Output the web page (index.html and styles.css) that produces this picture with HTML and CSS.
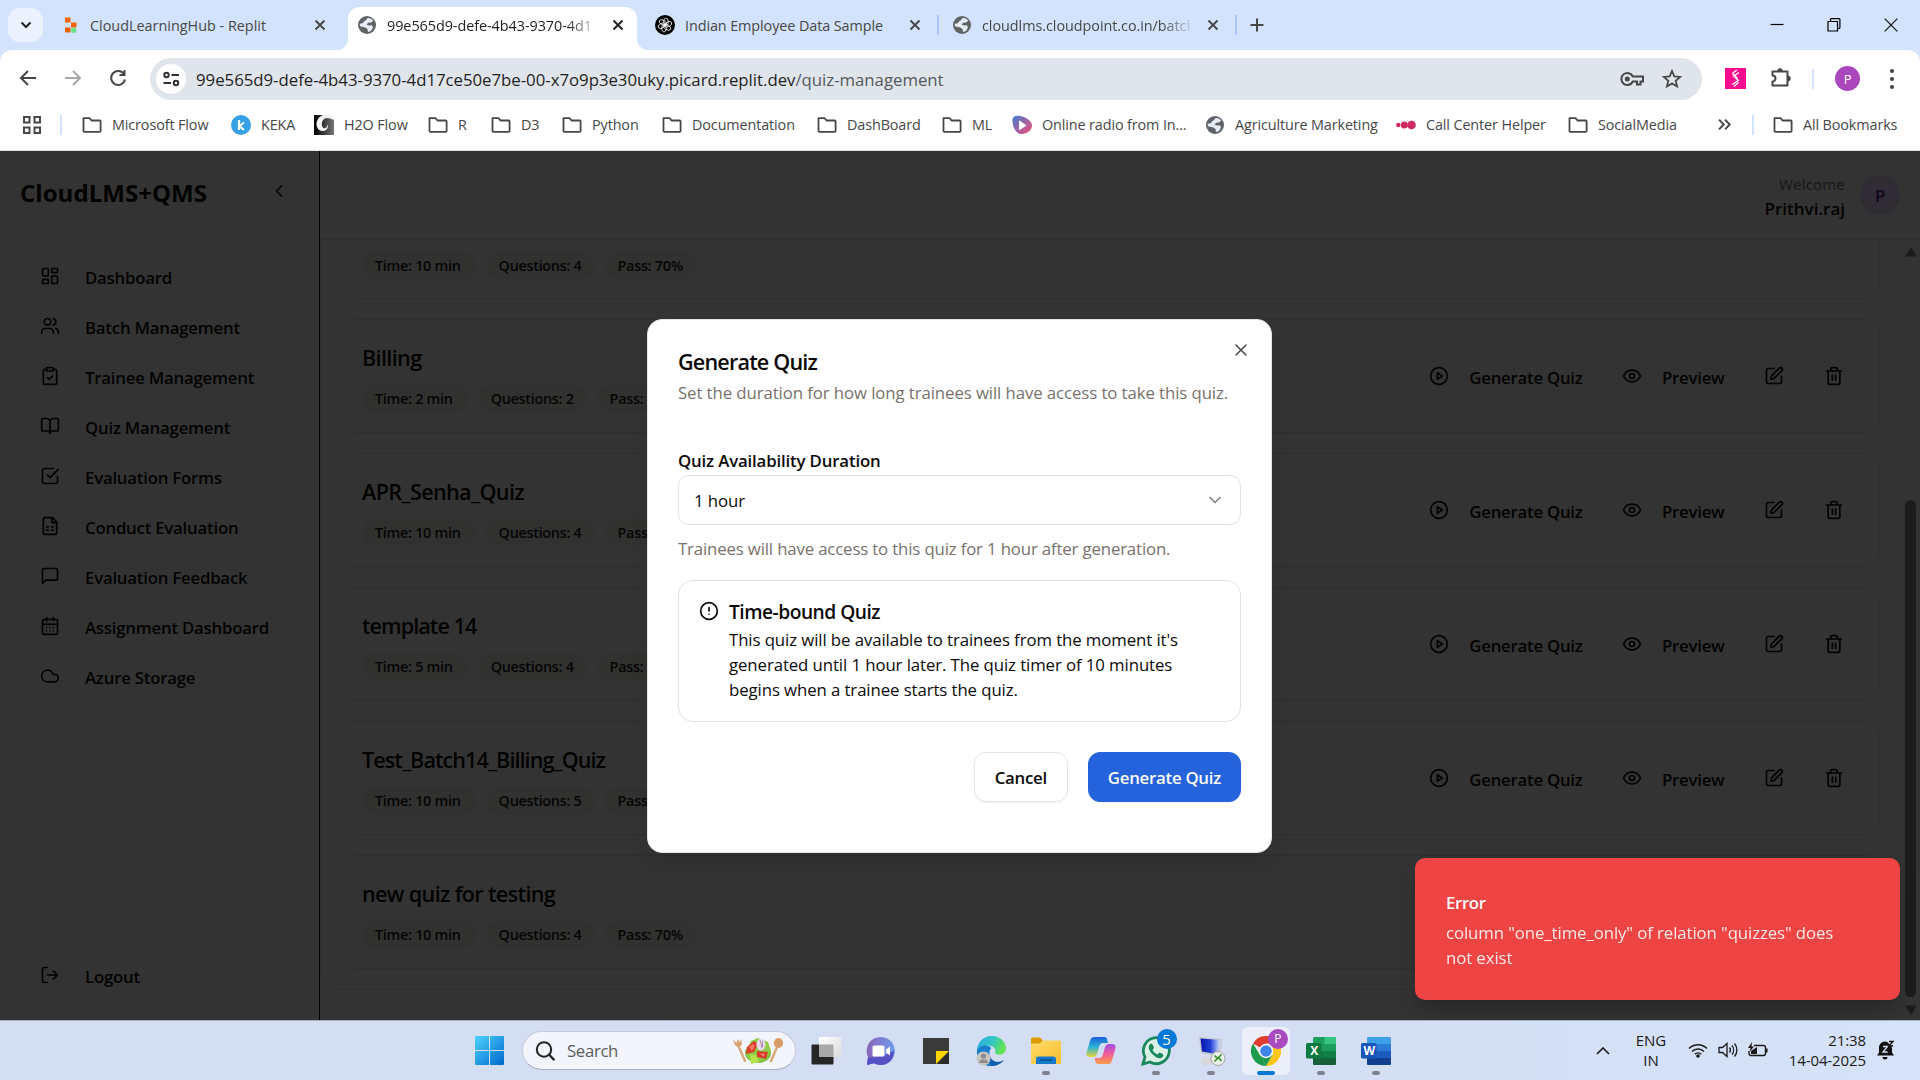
FILE: index.html
```html
<!DOCTYPE html>
<html lang="en">
<head>
<meta charset="utf-8">
<title>CloudLMS+QMS - Quiz Management</title>
<link rel="stylesheet" href="styles.css">
</head>
<body>
<svg class="defs" aria-hidden="true">
  <defs>
    <linearGradient id="g-win" x1="0" y1="0" x2="1" y2="1"><stop offset="0" stop-color="#4cd3fd"/><stop offset="1" stop-color="#0067cc"/></linearGradient>
    <linearGradient id="g-radio" x1="0" y1="0" x2="1" y2="1"><stop offset="0" stop-color="#3f7fd0"/><stop offset="1" stop-color="#fb4a78"/></linearGradient>
    <linearGradient id="g-h2o" x1="0" y1="0" x2="1" y2="0"><stop offset="0" stop-color="#000"/><stop offset="1" stop-color="#777"/></linearGradient>
    <linearGradient id="g-chat" x1="0" y1="0" x2="1" y2="0"><stop offset="0" stop-color="#8a63b5"/><stop offset="1" stop-color="#6f9cf0"/></linearGradient>
    <linearGradient id="g-edge" x1="0" y1="0" x2="1" y2="0.3"><stop offset="0" stop-color="#2aa7e8"/><stop offset=".6" stop-color="#35c7c0"/><stop offset="1" stop-color="#62e454"/></linearGradient>
    <linearGradient id="g-folder" x1="0" y1="0" x2="1" y2="1"><stop offset="0" stop-color="#ffdb6b"/><stop offset="1" stop-color="#f9bf2c"/></linearGradient>
    <linearGradient id="g-cop1" x1="0" y1="0" x2="0" y2="1"><stop offset="0" stop-color="#1a5fd8"/><stop offset=".5" stop-color="#2bb3d6"/><stop offset="1" stop-color="#e8d53a"/></linearGradient>
    <linearGradient id="g-cop2" x1="0" y1="0" x2="0" y2="1"><stop offset="0" stop-color="#a34ee8"/><stop offset=".5" stop-color="#f0609a"/><stop offset="1" stop-color="#fb9a45"/></linearGradient>
    <linearGradient id="g-pc" x1="0" y1="0" x2="1" y2="0"><stop offset="0" stop-color="#0a14a8"/><stop offset=".5" stop-color="#1f3fd6"/><stop offset="1" stop-color="#dbe6ff"/></linearGradient>
    <linearGradient id="g-tv" x1="0" y1="0" x2="1" y2="1"><stop offset="0" stop-color="#fff"/><stop offset="1" stop-color="#dcdcdc"/></linearGradient>

    <symbol id="i-close" viewBox="0 0 12 12"><path d="M1.5 1.5l9 9m0-9l-9 9" fill="none" stroke="currentColor" stroke-width="1.9"/></symbol>
    <symbol id="i-folder" viewBox="0 0 20 20"><path d="M1.5 3.2h6l2 2.3h8.2a.9.900 0 0 1 .9.900v9.500a.9.900 0 0 1-.9.900H2.400a.9.900 0 0 1-.9-.900z" fill="none" stroke="currentColor" stroke-width="1.8" stroke-linejoin="round"/></symbol>
    <symbol id="i-globe" viewBox="0 0 20 20"><circle cx="10" cy="10" r="9" fill="#5f6368"/><path d="M10.500 3c2.500-.3 4.500.9 5.700 2.700L14 7.500l-3 .2-1.300 2 2.300.8 2.800-.3 1.200 2-1.500 3c-1 1-2.300 1.700-3.500 1.800l-.5-3-2.200-1.500L3 11.200l-.3-2.400 3-.6 2-2.500 1.300-.4z" fill="#e6ecf5"/></symbol>
    <symbol id="i-grid" viewBox="0 0 24 24"><rect x="3" y="3" width="7" height="9" rx="1"/><rect x="14" y="3" width="7" height="5" rx="1"/><rect x="14" y="12" width="7" height="9" rx="1"/><rect x="3" y="16" width="7" height="5" rx="1"/></symbol>
    <symbol id="i-users" viewBox="0 0 24 24"><path d="M16 21v-2a4 4 0 0 0-4-4H6a4 4 0 0 0-4 4v2"/><circle cx="9" cy="7" r="4"/><path d="M22 21v-2a4 4 0 0 0-3-3.870M16 3.130a4 4 0 0 1 0 7.750"/></symbol>
    <symbol id="i-clip" viewBox="0 0 24 24"><rect x="8" y="2" width="8" height="4" rx="1"/><path d="M16 4h2a2 2 0 0 1 2 2v14a2 2 0 0 1-2 2H6a2 2 0 0 1-2-2V6a2 2 0 0 1 2-2h2M9 14l2 2 4-4"/></symbol>
    <symbol id="i-book" viewBox="0 0 24 24"><path d="M12 7v14M3 18a1 1 0 0 1-1-1V4a1 1 0 0 1 1-1h5a4 4 0 0 1 4 4 4 4 0 0 1 4-4h5a1 1 0 0 1 1 1v13a1 1 0 0 1-1 1h-6a3 3 0 0 0-3 3 3 3 0 0 0-3-3z"/></symbol>
    <symbol id="i-check" viewBox="0 0 24 24"><path d="M9 11l3 3L22 4M21 12v7a2 2 0 0 1-2 2H5a2 2 0 0 1-2-2V5a2 2 0 0 1 2-2h11"/></symbol>
    <symbol id="i-sheet" viewBox="0 0 24 24"><path d="M15 2H6a2 2 0 0 0-2 2v16a2 2 0 0 0 2 2h12a2 2 0 0 0 2-2V7zM14 2v4a2 2 0 0 0 2 2h4M8 13h2M14 13h2M8 17h2M14 17h2"/></symbol>
    <symbol id="i-msg" viewBox="0 0 24 24"><path d="M21 15a2 2 0 0 1-2 2H7l-4 4V5a2 2 0 0 1 2-2h14a2 2 0 0 1 2 2z"/></symbol>
    <symbol id="i-cal" viewBox="0 0 24 24"><path d="M8 2v4M16 2v4M3 10h18M8 14h.010M12 14h.010M16 14h.010M8 18h.010M12 18h.010M16 18h.010"/><rect x="3" y="4" width="18" height="18" rx="2"/></symbol>
    <symbol id="i-cloud" viewBox="0 0 24 24"><path d="M17.500 19H9a7 7 0 1 1 6.710-9h1.790a4.500 4.500 0 1 1 0 9z"/></symbol>
    <symbol id="i-out" viewBox="0 0 24 24"><path d="M9 21H5a2 2 0 0 1-2-2V5a2 2 0 0 1 2-2h4M16 17l5-5-5-5M21 12H9"/></symbol>
    <symbol id="i-play" viewBox="0 0 24 24"><circle cx="12" cy="12" r="10"/><path d="M10 8l6 4-6 4z"/></symbol>
    <symbol id="i-eye" viewBox="0 0 24 24"><path d="M2.060 12.350a1 1 0 0 1 0-.7 10.750 10.750 0 0 1 19.880 0 1 1 0 0 1 0 .7 10.750 10.750 0 0 1-19.880 0z"/><circle cx="12" cy="12" r="3"/></symbol>
    <symbol id="i-edit" viewBox="0 0 24 24"><path d="M12 3H5a2 2 0 0 0-2 2v14a2 2 0 0 0 2 2h14a2 2 0 0 0 2-2v-7M18.380 2.620a1 1 0 0 1 3 3l-9.010 9.010a2 2 0 0 1-.850.510l-2.870.840a.5.500 0 0 1-.620-.620l.840-2.870a2 2 0 0 1 .510-.850z"/></symbol>
    <symbol id="i-trash" viewBox="0 0 24 24"><path d="M3 6h18M19 6v14a2 2 0 0 1-2 2H7a2 2 0 0 1-2-2V6M8 6V4a2 2 0 0 1 2-2h4a2 2 0 0 1 2 2v2M10 11v6M14 11v6"/></symbol>
    <symbol id="i-left" viewBox="0 0 24 24"><path d="M15 18l-6-6 6-6"/></symbol>
    <symbol id="i-down" viewBox="0 0 24 24"><path d="M6 9l6 6 6-6"/></symbol>
    <symbol id="i-x" viewBox="0 0 24 24"><path d="M18 6L6 18M6 6l12 12"/></symbol>
    <symbol id="i-alert" viewBox="0 0 24 24"><circle cx="12" cy="12" r="10"/><path d="M12 8v4M12 16h.010"/></symbol>
  </defs>
</svg>

<header class="browser">
  <div class="tabstrip">
    <div class="tab-search"><svg width="12" height="8" viewBox="0 0 12 8"><path d="M1.500 1.500L6 6l4.500-4.500" fill="none" stroke="#1f1f1f" stroke-width="2"/></svg></div>
    <div class="tab tab-first">
      <svg class="fav" viewBox="0 0 20 20"><path d="M4 2.500h5.500v5H4zM10 7.500h5.500v5H10zM4 12.500h5.500v5H4z" fill="#f26207"/><circle cx="12.800" cy="15.200" r="2.700" fill="#6fe08a"/></svg>
      <span class="tab-title">CloudLearningHub - Replit</span>
      <svg class="tab-x"><use href="#i-close"/></svg>
    </div>
    <div class="tab tab-active">
      <svg class="fav"><use href="#i-globe"/></svg>
      <span class="tab-title fade">99e565d9-defe-4b43-9370-4d1</span>
      <svg class="tab-x"><use href="#i-close"/></svg>
    </div>
    <div class="tab tab-third">
      <svg class="fav" viewBox="0 0 20 20"><circle cx="10" cy="10" r="10" fill="#000"/><g fill="none" stroke="#fff" stroke-width=".8"><ellipse cx="11" cy="7" rx="2.300" ry="4"/><ellipse cx="11" cy="7" rx="2.300" ry="4" transform="rotate(60 10 10)"/><ellipse cx="11" cy="7" rx="2.300" ry="4" transform="rotate(120 10 10)"/><ellipse cx="11" cy="7" rx="2.300" ry="4" transform="rotate(180 10 10)"/><ellipse cx="11" cy="7" rx="2.300" ry="4" transform="rotate(240 10 10)"/><ellipse cx="11" cy="7" rx="2.300" ry="4" transform="rotate(300 10 10)"/></g></svg>
      <span class="tab-title">Indian Employee Data Sample</span>
      <svg class="tab-x"><use href="#i-close"/></svg>
    </div>
    <div class="tab tab-fourth">
      <svg class="fav"><use href="#i-globe"/></svg>
      <span class="tab-title fade">cloudlms.cloudpoint.co.in/batch</span>
      <svg class="tab-x"><use href="#i-close"/></svg>
    </div>
    <svg class="tab-plus" viewBox="0 0 14 14"><path d="M7 .5v13M.5 7h13" stroke="#474747" stroke-width="2"/></svg>
    <div class="win-controls">
      <svg viewBox="0 0 14 14"><path d="M.5 6.500h13" stroke="#000" stroke-width="1.200"/></svg>
      <svg viewBox="0 0 14 14"><path d="M1 3.500h9.500V13H1zM3.500 3.200V1.500a.8.800 0 0 1 .8-.8h7.700a.9.900 0 0 1 .9.900v8a.9.900 0 0 1-.9.900h-1" fill="none" stroke="#000" stroke-width="1.200"/></svg>
      <svg viewBox="0 0 14 14"><path d="M.7.700l12.600 12.600M13.300.700L.7 13.300" stroke="#111" stroke-width="1.200"/></svg>
    </div>
  </div>

  <div class="toolbar">
    <svg class="tb back" viewBox="0 0 18 18"><path d="M17 9H2M9 2L2 9l7 7" fill="none" stroke="#474747" stroke-width="2"/></svg>
    <svg class="tb fwd" viewBox="0 0 18 18"><path d="M1 9h15M9 2l7 7-7 7" fill="none" stroke="#a8a8a8" stroke-width="2"/></svg>
    <svg class="tb reload" viewBox="0 0 18 18"><path d="M15.300 5.500A7 7 0 1 0 16 10.500" fill="none" stroke="#474747" stroke-width="2"/><path d="M16.500 1v6h-6V5h4V1z" fill="#474747"/></svg>
    <div class="omnibox">
      <div class="site"><svg width="17" height="16" viewBox="0 0 17 16"><g fill="none" stroke="#303134" stroke-width="2"><circle cx="3.500" cy="4" r="2.200"/><path d="M8.500 4H16M.5 12H8"/><circle cx="13" cy="12" r="2.200"/></g></svg></div>
      <span class="url">99e565d9-defe-4b43-9370-4d17ce50e7be-00-x7o9p3e30uky.picard.replit.dev<span>/quiz-management</span></span>
      <svg class="key" viewBox="0 0 24 16"><path d="M12.800 5.500a6 6 0 1 0 0 5H17v3h3.500v-3H23v-5z" fill="none" stroke="#474747" stroke-width="2"/><circle cx="7.300" cy="8" r="2.500" fill="#474747"/></svg>
      <svg class="star" viewBox="0 0 20 20"><path d="M10 2l2.300 5.400 5.900.5-4.500 3.900 1.400 5.700-5.100-3-5.100 3 1.400-5.700-4.500-3.900 5.900-.5z" fill="none" stroke="#474747" stroke-width="1.800"/></svg>
    </div>
    <svg class="ext" viewBox="0 0 21 21"><path d="M0 0h21v21H0z" fill="#fb0a8e"/><path d="M12 2L7.500 5.200M14 4.500L8 8.500M7.500 5.500l5 5M9.500 9L14 13M13 12.500L7.500 16.500M13.500 14.500L9 18.500" stroke="#fff" stroke-width="1.400" fill="none"/></svg>
    <svg class="puzzle" viewBox="0 0 22 22"><path d="M2.500 5.500h15v14h-15v-4a3 3 0 0 0 0-6z" fill="none" stroke="#474747" stroke-width="2" stroke-linejoin="round"/><path d="M7.300 5a2.700 2.700 0 0 1 5.400 0zM18 9.800a2.700 2.700 0 0 1 0 5.400z" fill="#474747"/></svg>
    <i class="vsep"></i>
    <span class="profile">P</span>
    <svg class="dots" viewBox="0 0 6 22"><g fill="#474747"><circle cx="3" cy="3" r="2.100"/><circle cx="3" cy="11" r="2.100"/><circle cx="3" cy="19" r="2.100"/></g></svg>
  </div>

  <nav class="bookmarks">
    <span class="bm"><svg viewBox="0 0 20 20"><path d="M2 2h5.500v5.500H2zM12.500 2H18v5.500h-5.500zM2 12.500h5.500V18H2zM12.500 12.500H18V18h-5.500z" fill="none" stroke="#474747" stroke-width="2"/></svg></span>
    <i class="vsep"></i>
    <span class="bm"><svg><use href="#i-folder"/></svg>Microsoft Flow</span>
    <span class="bm"><svg viewBox="0 0 20 20"><circle cx="10" cy="10" r="10" fill="#35a0e6"/><path d="M8 5v10M13 7.500L8.500 11l4.500 4" stroke="#fff" stroke-width="2.200" fill="none"/></svg>KEKA</span>
    <span class="bm"><svg viewBox="0 0 20 20"><path d="M0 0h20v20H0z" fill="url(#g-h2o)"/><path d="M20 0H9C4 2 1.500 7 3 12c1.500 4 6 5 9 3 2-1.500 2.500-4 1-5.500.5 3-1.500 4.500-3.500 3.500C7 11.500 7.500 6 10 4c2.500-2 6-1 10 1z" fill="#f4f4f4"/></svg>H2O Flow</span>
    <span class="bm"><svg><use href="#i-folder"/></svg>R</span>
    <span class="bm"><svg><use href="#i-folder"/></svg>D3</span>
    <span class="bm"><svg><use href="#i-folder"/></svg>Python</span>
    <span class="bm"><svg><use href="#i-folder"/></svg>Documentation</span>
    <span class="bm"><svg><use href="#i-folder"/></svg>DashBoard</span>
    <span class="bm"><svg><use href="#i-folder"/></svg>ML</span>
    <span class="bm"><svg viewBox="0 0 20 20"><path d="M.5 5C.5 1.500 4 .3 8 1c6 1 12 5 12 9.500S15 19 10 19 .500 14 .500 5z" fill="url(#g-radio)"/><path d="M7.500 6v8.500l6.500-4z" fill="#fff" stroke="#fff" stroke-linejoin="round"/></svg>Online radio from In...</span>
    <span class="bm"><svg><use href="#i-globe"/></svg>Agriculture Marketing</span>
    <span class="bm"><svg viewBox="0 0 20 20"><g fill="#cf2a63"><circle cx="2.300" cy="10" r="2.200"/><circle cx="8.300" cy="10" r="3.500"/><circle cx="15.500" cy="10" r="4.300"/></g></svg>Call Center Helper</span>
    <span class="bm"><svg><use href="#i-folder"/></svg>SocialMedia</span>
    <span class="bm more"><svg viewBox="0 0 12 12"><path d="M1 1.500L5.300 6 1 10.500M6.500 1.500L10.800 6l-4.300 4.500" fill="none" stroke="#474747" stroke-width="1.800"/></svg></span>
    <i class="vsep"></i>
    <span class="bm"><svg><use href="#i-folder"/></svg>All Bookmarks</span>
  </nav>
</header>

<div class="page">
  <aside class="sidebar">
    <div class="brand"><h1>CloudLMS+QMS</h1><button class="ghost collapse"><svg class="lu"><use href="#i-left"/></svg></button></div>
    <nav class="menu">
      <a class="item"><svg class="lu"><use href="#i-grid"/></svg><span>Dashboard</span></a>
      <a class="item"><svg class="lu"><use href="#i-users"/></svg><span>Batch Management</span></a>
      <a class="item"><svg class="lu"><use href="#i-clip"/></svg><span>Trainee Management</span></a>
      <a class="item"><svg class="lu"><use href="#i-book"/></svg><span>Quiz Management</span></a>
      <a class="item"><svg class="lu"><use href="#i-check"/></svg><span>Evaluation Forms</span></a>
      <a class="item"><svg class="lu"><use href="#i-sheet"/></svg><span>Conduct Evaluation</span></a>
      <a class="item"><svg class="lu"><use href="#i-msg"/></svg><span>Evaluation Feedback</span></a>
      <a class="item"><svg class="lu"><use href="#i-cal"/></svg><span>Assignment Dashboard</span></a>
      <a class="item"><svg class="lu"><use href="#i-cloud"/></svg><span>Azure Storage</span></a>
    </nav>
    <a class="item logout"><svg class="lu"><use href="#i-out"/></svg><span>Logout</span></a>
  </aside>

  <div class="content">
    <div class="topbar">
      <div class="who"><span class="hello">Welcome</span><span class="name">Prithvi.raj</span></div>
      <span class="avatar">P</span>
    </div>
    <div class="scroll">
      <main class="panel">
        <article class="quiz scrolled">
          <div class="info"><div class="tags"><span>Time: 10 min</span><span>Questions: 4</span><span>Pass: 70%</span></div></div>
          <div class="actions"><button class="ghost wide"></button><button class="ghost mid"></button><button class="ghost small"></button><button class="ghost small"></button></div>
        </article>
        <article class="quiz">
          <div class="info"><h2>Billing</h2><div class="tags"><span>Time: 2 min</span><span>Questions: 2</span><span>Pass:</span></div></div>
          <div class="actions"><button class="ghost"><svg class="lu"><use href="#i-play"/></svg><span>Generate Quiz</span></button><button class="ghost"><svg class="lu"><use href="#i-eye"/></svg><span>Preview</span></button><button class="ghost"><svg class="lu"><use href="#i-edit"/></svg></button><button class="ghost"><svg class="lu"><use href="#i-trash"/></svg></button></div>
        </article>
        <article class="quiz">
          <div class="info"><h2>APR_Senha_Quiz</h2><div class="tags"><span>Time: 10 min</span><span>Questions: 4</span><span>Pass</span></div></div>
          <div class="actions"><button class="ghost"><svg class="lu"><use href="#i-play"/></svg><span>Generate Quiz</span></button><button class="ghost"><svg class="lu"><use href="#i-eye"/></svg><span>Preview</span></button><button class="ghost"><svg class="lu"><use href="#i-edit"/></svg></button><button class="ghost"><svg class="lu"><use href="#i-trash"/></svg></button></div>
        </article>
        <article class="quiz">
          <div class="info"><h2 class="tight">template 14</h2><div class="tags"><span>Time: 5 min</span><span>Questions: 4</span><span>Pass:</span></div></div>
          <div class="actions"><button class="ghost"><svg class="lu"><use href="#i-play"/></svg><span>Generate Quiz</span></button><button class="ghost"><svg class="lu"><use href="#i-eye"/></svg><span>Preview</span></button><button class="ghost"><svg class="lu"><use href="#i-edit"/></svg></button><button class="ghost"><svg class="lu"><use href="#i-trash"/></svg></button></div>
        </article>
        <article class="quiz">
          <div class="info"><h2 class="tight">Test_Batch14_Billing_Quiz</h2><div class="tags"><span>Time: 10 min</span><span>Questions: 5</span><span>Pass</span></div></div>
          <div class="actions"><button class="ghost"><svg class="lu"><use href="#i-play"/></svg><span>Generate Quiz</span></button><button class="ghost"><svg class="lu"><use href="#i-eye"/></svg><span>Preview</span></button><button class="ghost"><svg class="lu"><use href="#i-edit"/></svg></button><button class="ghost"><svg class="lu"><use href="#i-trash"/></svg></button></div>
        </article>
        <article class="quiz">
          <div class="info"><h2>new quiz for testing</h2><div class="tags"><span>Time: 10 min</span><span>Questions: 4</span><span>Pass: 70%</span></div></div>
        </article>
      </main>
      <div class="scrollbar">
        <svg class="arrow" viewBox="0 0 12 10"><path d="M6 1.200l4.800 7.600H1.200z" fill="#8b8b8b" stroke="#8b8b8b" stroke-width="1.500" stroke-linejoin="round"/></svg>
        <i class="thumb"></i>
        <svg class="arrow" viewBox="0 0 12 10"><path d="M6 8.800L1.200 1.200h9.600z" fill="#8b8b8b" stroke="#8b8b8b" stroke-width="1.500" stroke-linejoin="round"/></svg>
      </div>
    </div>
  </div>

  <div class="overlay">
    <section class="dialog">
      <svg class="lu dialog-x"><use href="#i-x"/></svg>
      <h3>Generate Quiz</h3>
      <p class="desc">Set the duration for how long trainees will have access to take this quiz.</p>
      <label>Quiz Availability Duration</label>
      <div class="select"><span>1 hour</span><svg class="lu"><use href="#i-down"/></svg></div>
      <p class="help">Trainees will have access to this quiz for 1 hour after generation.</p>
      <div class="alert">
        <svg class="lu"><use href="#i-alert"/></svg>
        <div><h4>Time-bound Quiz</h4><p>This quiz will be available to trainees from the moment it's<br>generated until 1 hour later. The quiz timer of 10 minutes<br>begins when a trainee starts the quiz.</p></div>
      </div>
      <div class="footer"><button class="btn">Cancel</button><button class="btn primary">Generate Quiz</button></div>
    </section>
  </div>
  <div class="toast"><strong>Error</strong><p>column "one_time_only" of relation "quizzes" does<br>not exist</p></div>
</div>

<footer class="taskbar">
  <svg class="start" viewBox="0 0 29 29"><path d="M1 0h13v14H0V1a1 1 0 0 1 1-1zM15 0h13a1 1 0 0 1 1 1v13H15zM0 15h14v14H1a1 1 0 0 1-1-1zM15 15h14v13a1 1 0 0 1-1 1H15z" fill="url(#g-win)"/></svg>
  <div class="search">
    <svg width="20" height="20" viewBox="0 0 20 20"><circle cx="9" cy="8.500" r="7.200" fill="none" stroke="#222" stroke-width="2"/><path d="M14 13.500l4.700 5" stroke="#222" stroke-width="2.400" stroke-linecap="round"/></svg>
    <span>Search</span>
    <svg class="salad" width="52" height="28" viewBox="0 0 52 28"><g stroke="#dba878" stroke-width="2.400" stroke-linecap="round"><path d="M6 8l7 16M46 8l-7 16"/></g><path d="M1 3l2 5c2 3 6 2 7-1L9 2 7.500 5 5.500 2 4.500 6z" fill="#dba070"/><ellipse cx="46.500" cy="6" rx="4.600" ry="5" fill="#d99c66"/><ellipse cx="26" cy="16" rx="13" ry="10" fill="#7fbf3a"/><path d="M13 17l6-13 7-3 10 4 3 9-7 9-11 3z" fill="#8fca45"/><path d="M15 10l7-6 4 3-4 8-8 2zM25 14l11 1-2 7-9-2z" fill="#d93a2b"/><path d="M17 10l4-3 2 2-3 5zM27 16l6 1-1 3z" fill="#f47b62"/><ellipse cx="29" cy="7.500" rx="4.500" ry="6" fill="#e9dcea"/><path d="M18 18l6 0 3 7-8 2z" fill="#b5e24c"/><path d="M28 3l2 8M30.500 4l0 6" stroke="#b48bb8" fill="none"/></svg>
  </div>
  <div class="apps">
    <span class="app"><svg viewBox="0 0 30 30"><rect x=".5" y="8.500" width="22" height="20" rx="1" fill="#262626"/><rect x="8" y="1" width="22" height="20" rx="1" fill="url(#g-tv)"/><path d="M8 8.500h14.500V21H8z" fill="#a9a9a9"/></svg></span>
    <span class="app"><svg viewBox="0 0 30 30"><path d="M15 1a14 14 0 1 1-7 26.200L1 29l1-8A14 14 0 0 1 15 1z" fill="url(#g-chat)"/><path d="M15 29a14 14 0 0 1-7-1.800L1 29l1-8c8 2 18-1 26-6.500C28.500 23 22 29 15 29z" fill="#554fc4"/><rect x="6.500" y="9.500" width="12" height="11" rx="1.500" fill="#fff"/><path d="M20 13.500l4-3v9l-4-3z" fill="#fff"/></svg></span>
    <span class="app"><svg viewBox="0 0 30 30"><path d="M2 2h26v26H2z" fill="#3a3a3a"/><path d="M15 15h13L15 28z" fill="#ffd500"/><path d="M28 16L17 28h11z" fill="#2b2b2b"/></svg></span>
    <span class="app"><svg viewBox="0 0 30 30"><path d="M1 17C0 7 7 0 16 0c8 0 14 6 14 12 0 6-5 8-10 6-2-1 0-3-1-5-2-4-9-4-13-1-3 2-4 3-5 5z" fill="url(#g-edge)"/><path d="M1 15c2-5 10-7 14-3-3 3-2 10 3 13 4 2 8 0 10-1-3 4-8 6-12 6C7 30 1 24 1 15z" fill="#145fb0"/><path d="M1 15c2-5 10-7 14-3-4 5-3 12 0 18C7 30 1 24 1 15z" fill="#1b7fd0"/><circle cx="7.500" cy="22.500" r="7" fill="#c9c6c2"/><circle cx="7.500" cy="20" r="2.600" fill="#8f8b86"/><path d="M3 27c0-5 9-5 9 0z" fill="#8f8b86"/></svg></span>
    <span class="app run"><svg viewBox="0 0 30 30"><path d="M0 3a1.500 1.500 0 0 1 1.500-1.500H9L12 4.500 9 8H0z" fill="#dc9a08"/><path d="M0 7.500h9L12 4.500h16.500A1.500 1.500 0 0 1 30 6v20.500a1.500 1.500 0 0 1-1.500 1.500h-27A1.500 1.500 0 0 1 0 26.500z" fill="url(#g-folder)"/><path d="M5 28v-5a2.500 2.500 0 0 1 2.500-2.500h15A2.500 2.500 0 0 1 25 23v5z" fill="#1779c9"/><path d="M9 24h12" stroke="#0a4e8f" stroke-width="1.500"/></svg></span>
    <span class="app"><svg viewBox="0 0 30 30"><path d="M8 1h10c3 0 3 2 4 6h-5c-2 0-3 1-4 4l-2 7c-1 2-2 3-4 3H4c-4 0-4-3-3-6l3-10c1-3 2-4 4-4z" fill="url(#g-cop1)"/><path d="M22 28H13c-3 0-4-2-4-5l0-1h4c2 0 3-1 4-4l2-7c1-2 2-3 4-3h3c4 0 4 3 3 6l-3 10c-1 3-2 4-4 4z" fill="url(#g-cop2)"/></svg></span>
    <span class="app run"><svg viewBox="0 0 30 30"><path d="M2 28l2-7A13 13 0 1 1 9 26z" fill="#d9f0e6" stroke="#19875a" stroke-width="2.800"/><path d="M9 8c2-1 3 0 4 4l-1.500 2c1 2 3 4 5 4.500l2-2c3 1 4.500 2 3.500 4-2 3-6 2-9-1-4-3-7-8-4-11.500z" fill="#19875a"/></svg><b class="badge blue">5</b></span>
    <span class="app run"><svg viewBox="0 0 30 30"><path d="M3 1l23 2-2 18L5 17z" fill="#c5c8cc"/><path d="M4.500 2.500l20 1.500-2 14.500L6 15.500z" fill="url(#g-pc)"/><ellipse cx="11" cy="25" rx="6.500" ry="4.500" fill="#d6d8db"/><circle cx="22" cy="22.500" r="7" fill="#eceee8" stroke="#a6a8a3"/><path d="M18.500 19.500l3 3-3 3M25.500 18.500l-3 3 3 3.500" fill="none" stroke="#35962e" stroke-width="1.700"/></svg></span>
    <span class="app run focus"><svg viewBox="0 0 30 30"><path d="M15 15L2 7.500A15 15 0 0 1 28 7.500H15z" fill="#df3b2f"/><path d="M2 7.500L9 19l6 11A15 15 0 0 1 2 7.500z" fill="#1e9a4d"/><path d="M28 7.500A15 15 0 0 1 15 30l6.500-11.500V7.500z" fill="#fbc61a"/><path d="M15 30L8.500 18.750h13z" fill="#1e9a4d"/><circle cx="15" cy="15" r="7.200" fill="#fff"/><circle cx="15" cy="15" r="5.800" fill="#3f84ec"/></svg><b class="badge purple">P</b></span>
    <span class="app run"><svg viewBox="0 0 30 30"><rect x="7" y="1" width="23" height="28" rx="1.500" fill="#1e9e5e"/><path d="M18.500 1H28.500A1.500 1.500 0 0 1 30 2.500V8H18.500z" fill="#35c481"/><path d="M7 15h11.500v7H7z" fill="#117a41"/><path d="M18.500 15H30v7H18.500z" fill="#118048"/><path d="M7 22h23v5.500a1.500 1.500 0 0 1-1.500 1.500h-20A1.500 1.500 0 0 1 7 27.500z" fill="#18603a"/><rect y="7" width="15.500" height="15.500" rx="1.500" fill="#0f7a40"/></svg><b class="letter">X</b></span>
    <span class="app run"><svg viewBox="0 0 30 30"><rect x="6" y="1" width="24" height="28" rx="1.500" fill="#2b7cd6"/><path d="M6 8V2.500A1.500 1.500 0 0 1 7.500 1h21A1.500 1.500 0 0 1 30 2.500V8z" fill="#3fa0ea"/><path d="M6 15h24v7H6z" fill="#1b5cbe"/><path d="M6 22h24v5.500a1.500 1.500 0 0 1-1.500 1.500h-21A1.500 1.500 0 0 1 6 27.500z" fill="#123f90"/><rect y="7" width="15.500" height="15.500" rx="1.500" fill="#1a55bc"/></svg><b class="letter">W</b></span>
  </div>
  <div class="tray">
    <svg class="up" viewBox="0 0 14 8"><path d="M1 7l6-6 6 6" fill="none" stroke="#1a1a1a" stroke-width="1.600"/></svg>
    <span class="lang">ENG<br>IN</span>
    <svg class="wifi" viewBox="0 0 20 16"><g fill="none" stroke="#1a1a1a" stroke-width="1.500"><path d="M1 6.500a12.500 12.500 0 0 1 18 0M4 9.500a8.500 8.500 0 0 1 12 0M6.800 12.300a4.600 4.600 0 0 1 6.400 0"/></g><circle cx="10" cy="14" r="1.800" fill="#1a1a1a"/></svg>
    <svg class="vol" viewBox="0 0 20 16"><g fill="none" stroke="#1a1a1a" stroke-width="1.300"><path d="M1 5.500h3.500L9 1.500v13L4.500 10.500H1zM11.500 5.500a4 4 0 0 1 0 5M14 3.500a7 7 0 0 1 0 9M16.500 1.500a10 10 0 0 1 0 13"/></g></svg>
    <svg class="bat" viewBox="0 0 20 16"><path d="M6 3.500h9.500a2 2 0 0 1 2 2v6a2 2 0 0 1-2 2H3a2 2 0 0 1-2-2V9" fill="none" stroke="#1a1a1a" stroke-width="1.400"/><path d="M3 12l0-3 6-4v7zM4 0L0 6h2.500L1.500 10 6 4.500H3.500z" fill="#1a1a1a"/><path d="M18 6.500h1.500v4H18z" fill="#1a1a1a"/></svg>
    <span class="clock">21:38<br>14-04-2025</span>
    <svg class="bell" viewBox="0 0 18 20"><path d="M0 15.500l2-3V8a6 6 0 0 1 9-5.500L15 8v4.500l2 3zM5.500 17h5a2.500 2.500 0 0 1-5 0z" fill="#111"/><path d="M6 6.500h4.500L6 12h4.500" fill="none" stroke="#d6e1f6" stroke-width="1.300"/><path d="M12 1.500h4L12 6h4" fill="none" stroke="#111" stroke-width="1.400"/></svg>
  </div>
</footer>
</body>
</html>
```
FILE: styles.css
```css
* { box-sizing: border-box; margin: 0; padding: 0; }
body {
  width: 1920px; height: 1080px; overflow: hidden;
  display: flex; flex-direction: column;
  font-family: "Open Sans", "Noto Sans", sans-serif;
  font-size: 16.8px; letter-spacing: -0.09px; color: #0c0a09; background: #fff;
}
svg { display: block; flex: none; }
button { font: inherit; letter-spacing: inherit; color: inherit; background: none; border: 0; }
.defs { position: absolute; width: 0; height: 0; }
.lu { width: 20px; height: 20px; fill: none; stroke: currentColor; stroke-width: 2; stroke-linecap: round; stroke-linejoin: round; }

/* browser chrome */
.browser { height: 151px; flex: none; background: #d3e3fd; border-bottom: 1px solid #dde3e3; font-size: 14.4px; color: #474747; }
.tabstrip { height: 50px; display: flex; align-items: center; padding-left: 8px; }
.tab-search { width: 35px; height: 34px; border-radius: 12px; background: #ebf2fe; display: grid; place-items: center; }
.tab { height: 43px; margin-top: 7px; padding-bottom: 7px; display: flex; align-items: center; }
.tab-first { width: 305px; padding-left: 18px; }
.tab-active { width: 289px; padding-left: 9px; background: #fff; border-radius: 12px 12px 0 0; color: #1f1f1f; position: relative; }
.tab-active::before, .tab-active::after { content: ""; position: absolute; bottom: 0; width: 12px; height: 12px; }
.tab-active::before { left: -12px; background: radial-gradient(circle at 0 0, transparent 12px, #fff 12.500px); }
.tab-active::after { right: -12px; background: radial-gradient(circle at 100% 0, transparent 12px, #fff 12.500px); }
.tab-third { width: 302px; padding-left: 18px; position: relative; }
.tab-fourth { width: 298px; padding-left: 13px; position: relative; }
.tab-third::after, .tab-fourth::after { content: ""; position: absolute; right: 0; top: 8px; width: 2px; height: 20px; background: #a8c7fa; }
.fav { width: 20px; height: 20px; }
.tab-title { flex: none; margin-left: 10px; width: 209px; white-space: nowrap; letter-spacing: -0.05px; }
.tab-first .tab-title { width: 219px; margin-left: 9px; letter-spacing: 0; }
.tab-third .tab-title { width: 220px; letter-spacing: -0.09px; }
.tab-active .tab-title { margin-left: 10px; }
.fade { -webkit-mask-image: linear-gradient(90deg, #000 86%, transparent 102%); mask-image: linear-gradient(90deg, #000 86%, transparent 102%); }
.tab-x { width: 12px; height: 12px; margin-left: 16px; }
.tab-first .tab-x { margin-left: 5px; }
.tab-third .tab-x { margin-left: 4px; }
.tab-fourth .tab-x { margin-left: 16px; }
.tab-plus { width: 14px; height: 14px; margin-left: 13px; }
.win-controls { margin-left: auto; display: flex; gap: 43px; padding-right: 22px; }
.win-controls svg { width: 14px; height: 14px; }

.toolbar { height: 57px; background: #fff; border-radius: 12px 12px 0 0; display: flex; align-items: center; padding-left: 19px; }
.tb { width: 18px; height: 18px; margin-top: -1px; }
.fwd { margin-left: 27px; }
.reload { margin-left: 27px; }
.omnibox { width: 1552px; height: 42px; margin-left: 23px; border-radius: 21px; background: #e0e5ec; display: flex; align-items: center; padding-left: 6px; margin-top: 1px; }
.site { width: 30px; height: 30px; border-radius: 50%; background: #fff; display: grid; place-items: center; }
.url { margin-left: 10px; font-size: 16.800px; letter-spacing: -0.02px; color: #1f1f1f; }
.url span { color: #54585d; }
.key { width: 24px; height: 16px; margin-left: auto; }
.star { width: 20px; height: 20px; margin: 0 20px 0 18px; }
.ext { width: 21px; height: 21px; margin-left: 23px; }
.puzzle { width: 22px; height: 22px; margin: -4px 0 0 24px; }
.vsep { width: 2px; height: 20px; background: #d3e3fd; }
.toolbar .vsep { margin-left: 20px; }
.profile { width: 25px; height: 25px; margin-left: 21px; border-radius: 50%; background: #ab47bc; color: #fff; font-size: 13px; display: grid; place-items: center; }
.dots { width: 6px; height: 22px; margin-left: 29px; }

.bookmarks { height: 43px; background: #fff; display: grid; align-items: center; padding-bottom: 8px; padding-left: 22px;
  grid-template-columns: 38px 22px 149px 83px 114px 63px 71px 100px 155px 125px 70px 193px 191px 172px 150px 34px 21px 1fr; }
.bm { display: flex; align-items: center; gap: 10px; white-space: nowrap; letter-spacing: -0.12px; }
.bm svg { width: 20px; height: 20px; }
.bm.more svg { width: 13px; height: 13px; }

/* application page */
.page { height: 869px; flex: none; display: flex; position: relative; overflow: hidden; background: #fff; }
.sidebar { width: 320px; border-right: 1px solid #000; display: flex; flex-direction: column; padding: 17px 19px 20px 20px; }
.brand { display: flex; justify-content: space-between; height: 45px; }
.brand h1 { font-size: 24px; font-weight: 700; line-height: 50px; letter-spacing: 0.04px; }
.ghost, .item { border-radius: 12px; box-shadow: 0 1px 2px rgba(0, 0, 0, .06); display: flex; align-items: center; font-weight: 600; letter-spacing: -0.25px; }
.collapse { width: 42px; height: 45px; justify-content: center; }
.menu { margin-top: 38px; display: flex; flex-direction: column; }
.item { height: 50px; padding-left: 20px; gap: 25px; letter-spacing: -0.22px; }
.item span { margin-top: 2px; }
.logout { margin-top: auto; }

.content { flex: 1; display: flex; flex-direction: column; }
.topbar { height: 89px; flex: none; border-bottom: 1px solid #e7e5e4; display: flex; justify-content: flex-end; align-items: center; padding-right: 20px; gap: 15px; }
.who { display: flex; flex-direction: column; align-items: flex-end; padding-top: 3px; }
.hello { font-size: 15px; line-height: 23px; letter-spacing: .2px; color: #78716c; }
.name { font-size: 17px; line-height: 25px; font-weight: 600; letter-spacing: 0; }
.avatar { width: 40px; height: 40px; border-radius: 50%; background: #efdcff; color: #6b11a8; font-weight: 600; display: grid; place-items: center; }
.scroll { flex: 1; min-height: 0; display: flex; align-items: flex-end; padding-bottom: 30px; overflow: hidden; }
.panel { width: 1581px; padding: 20px; flex: none; display: flex; flex-direction: column; gap: 20px; border: 1px solid #e7e5e4; border-radius: 15px; }
.quiz { height: 114px; flex: none; border: 1px solid #e7e5e4; border-radius: 15px; display: flex; justify-content: space-between; align-items: center; padding: 0 20px; }
.info h2 { font-size: 21.600px; line-height: 30px; font-weight: 600; letter-spacing: -0.65px; margin: 2px 0 12px; }
.info .tight { letter-spacing: -0.95px; }
.tags { display: flex; gap: 10px; }
.tags span { height: 27px; line-height: 27px; padding: 0 13px; border-radius: 14px; background: #f3f2f1; font-size: 14.400px; font-weight: 600; letter-spacing: -0.28px; color: #1c1917; min-width: 84px; }
.tags span:first-child { padding-right: 15px; }
.scrolled { align-items: flex-end; padding-bottom: 19px; }
.scrolled .actions { margin-bottom: 26px; gap: 10px; }
.wide { width: 182px; }
.mid { width: 131px; }
.actions .small { width: 50px; }
.actions { display: flex; gap: 10.500px; }
.actions .ghost { height: 45px; padding: 0 14.500px; gap: 20px; }
.actions .ghost:last-child { padding-right: 15.500px; }
.actions .ghost span { margin-top: 3px; }
.scrollbar { width: 20px; align-self: stretch; flex: none; display: flex; flex-direction: column; align-items: center; margin-bottom: -30px; padding: 7px 0 5px; border-left: 1px solid #f0f0f0; margin-left: -1px; }
.arrow { width: 12px; height: 10px; }
.arrow:last-child { margin-top: auto; }
.thumb { width: 11px; height: 497px; border-radius: 6px; background: #8b8b8b; margin-top: 243px; }

.overlay { position: absolute; inset: 0; background: rgba(0, 0, 0, .8); display: flex; justify-content: center; align-items: flex-start; padding: 168px 1px 0 0; }
.dialog { width: 625px; height: 534px; background: #fff; border: 1px solid #e7e5e4; border-radius: 15px; padding: 28px 30px; position: relative; box-shadow: 0 12px 19px -4px rgba(0, 0, 0, .1); }
.dialog-x { position: absolute; right: 20px; top: 20px; color: #444; stroke-width: 1.800; }
.dialog h3 { font-size: 21.600px; line-height: 28px; font-weight: 600; letter-spacing: -0.83px; }
.desc, .help { line-height: 25px; color: #78716c; }
.desc { margin-top: 4px; }
.dialog label { display: block; margin-top: 43px; font-weight: 600; letter-spacing: -0.15px; line-height: 25px; }
.select { height: 50px; margin-top: 2px; border: 1px solid #e3e1e0; border-radius: 11px; padding: 0 15px; display: flex; align-items: center; justify-content: space-between; }
.select .lu { color: #858585; }
.help { margin-top: 11px; letter-spacing: -0.15px; }
.alert { height: 142px; margin-top: 19px; border: 1px solid #e3e1e0; border-radius: 15px; padding: 17px 20px; display: flex; gap: 10px; }
.alert .lu { margin-top: 3px; }
.alert h4 { font-size: 19.200px; line-height: 28px; font-weight: 600; letter-spacing: -0.5px; }
.alert p { line-height: 25px; margin-top: 1px; }
.footer { display: flex; justify-content: flex-end; gap: 20px; margin-top: 30px; }
.btn { height: 50px; padding: 0 20px; border: 1px solid #e7e5e4; border-radius: 12px; font-weight: 600; letter-spacing: -0.25px; box-shadow: 0 1px 2px rgba(0, 0, 0, .05); }
.btn.primary { background: #2563dc; border-color: #2563dc; color: #fafaf9; padding: 0 19px; }
.toast { position: absolute; right: 20px; bottom: 20px; width: 485px; height: 142px; border-radius: 10px; background: #ef4444; color: #fafaf9; padding: 32px 31px; box-shadow: 0 12px 19px -4px rgba(0, 0, 0, .25); line-height: 25px; }
.toast strong { display: block; font-weight: 600; letter-spacing: -0.35px; }
.toast p { margin-top: 5px; opacity: .9; }

/* taskbar */
.taskbar { height: 60px; flex: none; display: flex; align-items: center; background: linear-gradient(90deg, #d5dff3, #d3ddf3 60%, #d5e2f7); border-top: 1px solid #a9afbb; padding-left: 475px; }
.start { width: 29px; height: 29px; }
.search { width: 274px; height: 39px; margin-left: 18px; border-radius: 20px; background: #f2f5fb; border: 1px solid #c5cbdc; border-bottom-color: #a9b0c4; display: flex; align-items: center; padding: 0 11px 0 12px; }
.search span { margin-left: 12px; color: #5c5c5c; letter-spacing: -0.35px; }
.salad { margin-left: auto; }
.apps { display: flex; margin-left: 2px; }
.app { width: 55.100px; height: 60px; position: relative; display: grid; place-items: center; }
.app svg { width: 30px; height: 30px; position: relative; z-index: 1; }
.run::after { content: ""; position: absolute; bottom: 6px; width: 8px; height: 4px; border-radius: 2px; background: #7d828e; z-index: 1; }
.focus::before { content: ""; position: absolute; left: 3px; top: 6px; width: 48px; height: 48px; border-radius: 6px; background: #eaeff9; }
.focus::after { width: 18px; background: #0078d4; }
.badge { position: absolute; z-index: 2; left: 28px; top: 8px; width: 20px; height: 20px; border-radius: 50%; color: #fff; font-size: 15px; line-height: 20px; text-align: center; font-weight: 400; }
.blue { background: #0078d7; }
.purple { background: #a94abf; font-size: 12px; left: 29px; }
.letter { position: absolute; z-index: 2; left: 12.500px; top: 22px; width: 15.500px; line-height: 15.500px; font-size: 12px; text-align: center; color: #fff; }
.tray { margin-left: auto; display: flex; align-items: center; padding-right: 25px; color: #1a1a1a; font-size: 15px; line-height: 20px; letter-spacing: 0; }
.up { width: 14px; height: 8px; }
.lang { width: 40px; margin: -2px 0 0 21px; text-align: center; }
.wifi, .vol, .bat { width: 20px; height: 16px; margin-top: -2px; }
.wifi { margin-left: 17px; }
.vol { margin-left: 10px; }
.bat { margin-left: 10px; }
.clock { width: 98px; margin-top: -2px; text-align: right; letter-spacing: -0.1px; }
.bell { width: 18px; height: 20px; margin: -2px 0 0 11px; }
```
